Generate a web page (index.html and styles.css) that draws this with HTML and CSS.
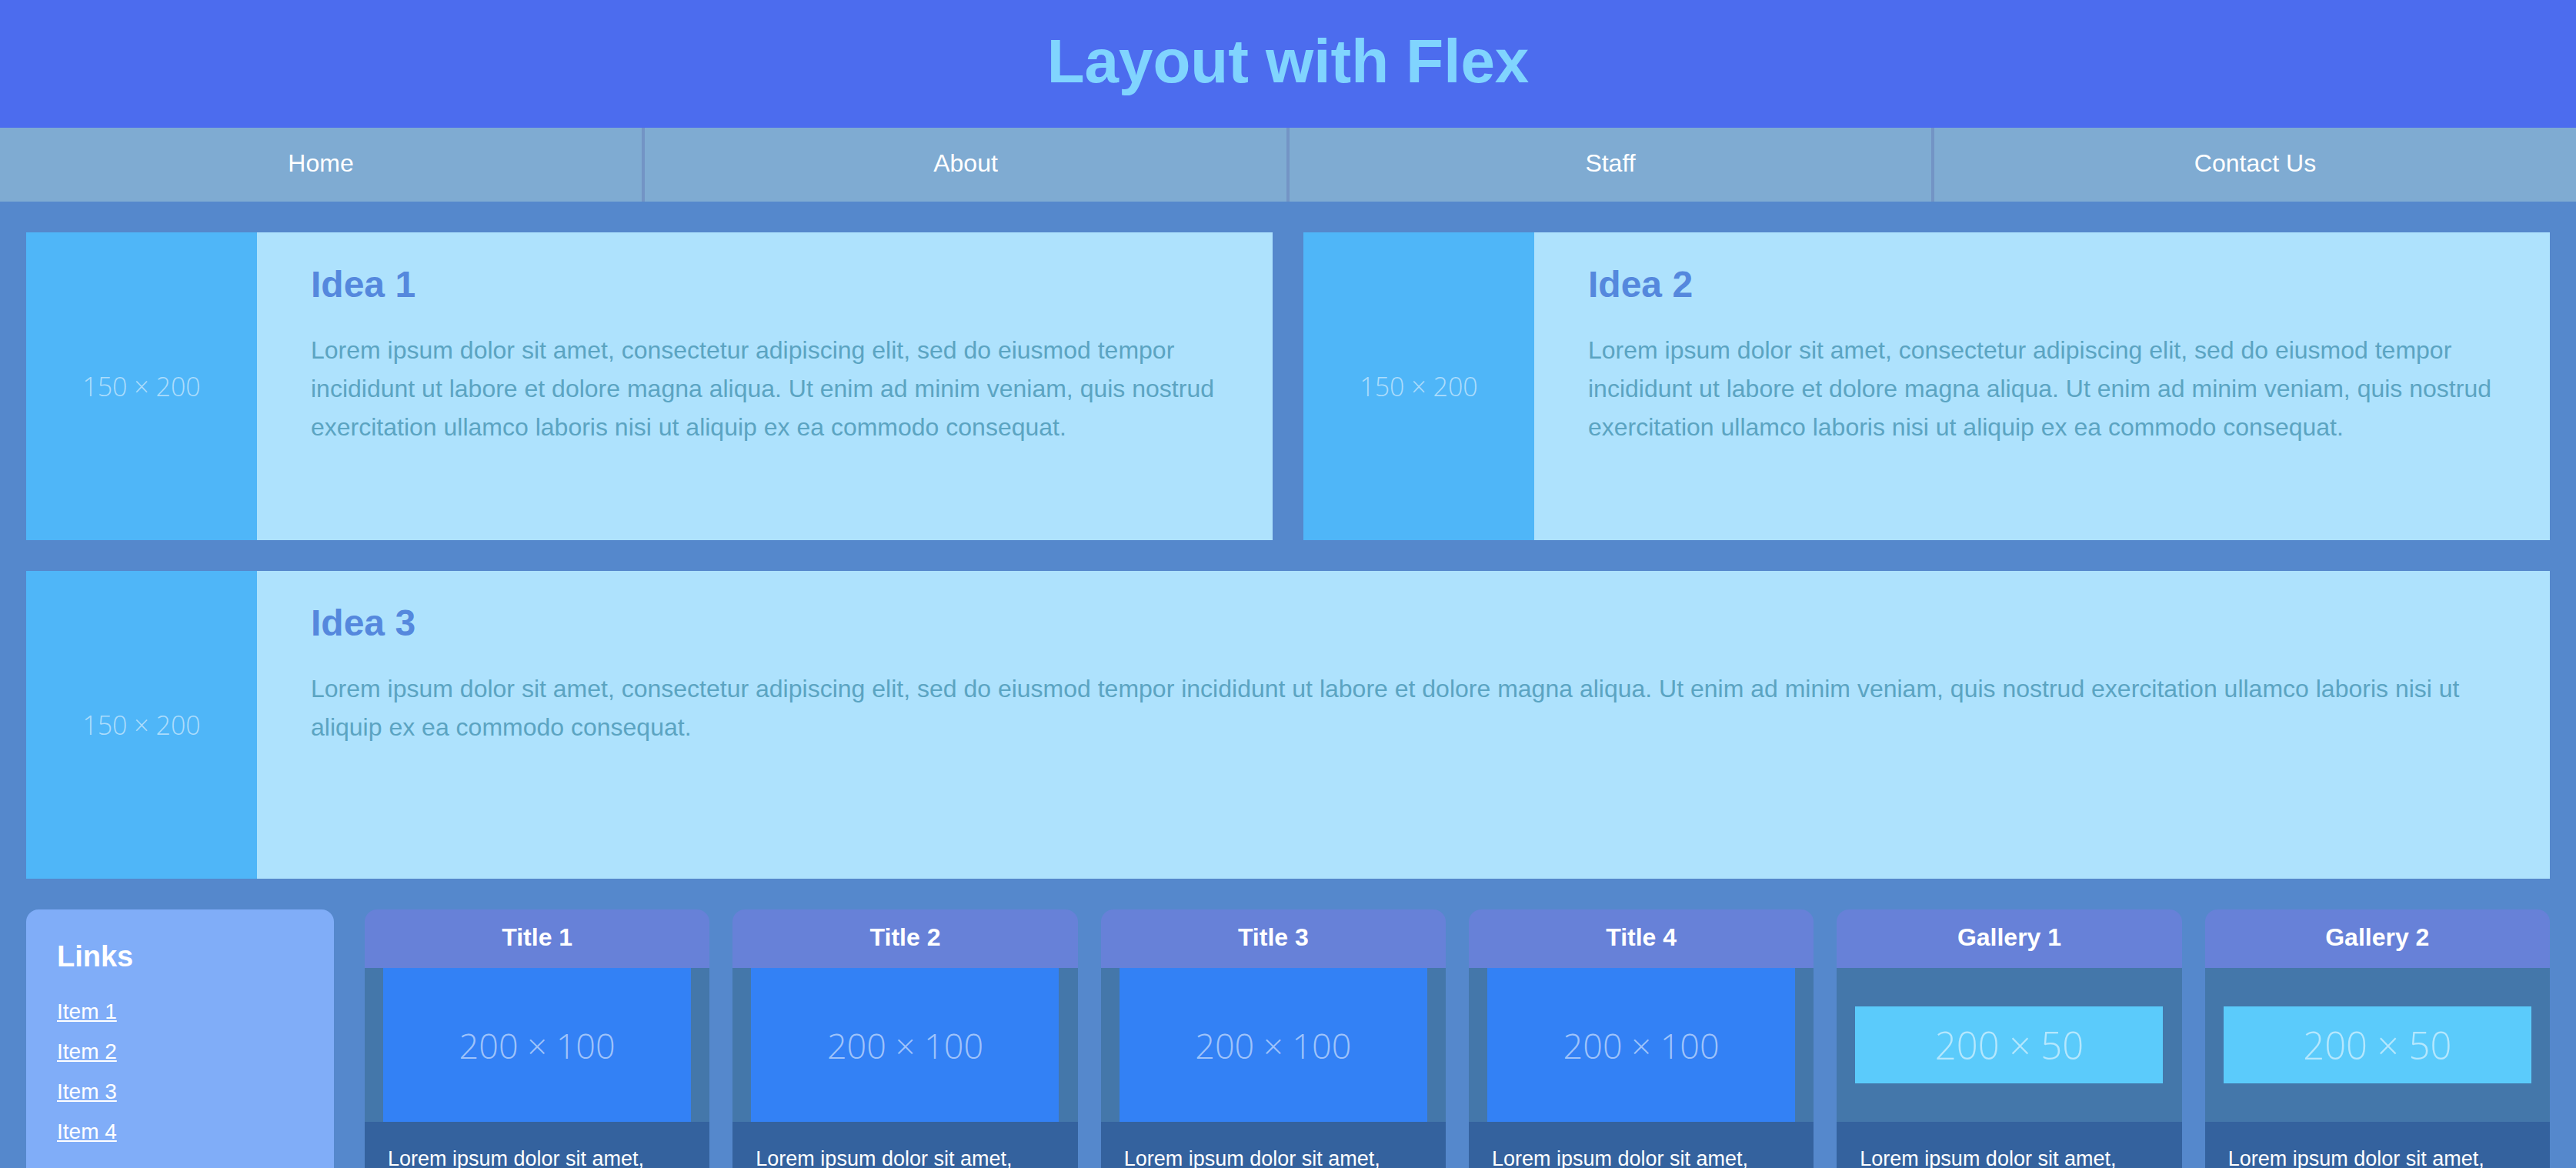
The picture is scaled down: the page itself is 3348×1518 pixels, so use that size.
FILE: index.html
```html
<!DOCTYPE html>
<html lang="en">
<head>
<meta charset="utf-8">
<title>Layout with Flex</title>
<link rel="stylesheet" href="styles.css">
</head>
<body>
<header class="site-header">
  <h1 class="site-title">Layout with Flex</h1>
</header>
<nav class="site-nav">
  <a class="nav-item" href="#">Home</a>
  <a class="nav-item" href="#">About</a>
  <a class="nav-item" href="#">Staff</a>
  <a class="nav-item" href="#">Contact Us</a>
</nav>
<main class="main">
  <section class="idea-row">
    <article class="idea">
      <div class="idea-img"><span class="ph ph-150">150 × 200</span></div>
      <div class="idea-body">
        <h2 class="idea-title">Idea 1</h2>
        <p class="idea-text">Lorem ipsum dolor sit amet, consectetur adipiscing elit, sed do eiusmod tempor incididunt ut labore et dolore magna aliqua. Ut enim ad minim veniam, quis nostrud exercitation ullamco laboris nisi ut aliquip ex ea commodo consequat.</p>
      </div>
    </article>
    <article class="idea">
      <div class="idea-img"><span class="ph ph-150">150 × 200</span></div>
      <div class="idea-body">
        <h2 class="idea-title">Idea 2</h2>
        <p class="idea-text">Lorem ipsum dolor sit amet, consectetur adipiscing elit, sed do eiusmod tempor incididunt ut labore et dolore magna aliqua. Ut enim ad minim veniam, quis nostrud exercitation ullamco laboris nisi ut aliquip ex ea commodo consequat.</p>
      </div>
    </article>
  </section>
  <section class="idea-row">
    <article class="idea">
      <div class="idea-img"><span class="ph ph-150">150 × 200</span></div>
      <div class="idea-body">
        <h2 class="idea-title">Idea 3</h2>
        <p class="idea-text">Lorem ipsum dolor sit amet, consectetur adipiscing elit, sed do eiusmod tempor incididunt ut labore et dolore magna aliqua. Ut enim ad minim veniam, quis nostrud exercitation ullamco laboris nisi ut aliquip ex ea commodo consequat.</p>
      </div>
    </article>
  </section>
  <section class="bottom-row">
    <aside class="links">
      <h3 class="links-title">Links</h3>
      <ul class="links-list">
        <li><a href="#">Item 1</a></li>
        <li><a href="#">Item 2</a></li>
        <li><a href="#">Item 3</a></li>
        <li><a href="#">Item 4</a></li>
      </ul>
    </aside>
    <div class="cards">
      <div class="card">
        <div class="card-head">Title 1</div>
        <div class="card-media"><div class="card-img"><span class="ph ph-100">200 × 100</span></div></div>
        <div class="card-text">Lorem ipsum dolor sit amet, consectetur adipiscing elit, sed do eiusmod tempor.</div>
      </div>
      <div class="card">
        <div class="card-head">Title 2</div>
        <div class="card-media"><div class="card-img"><span class="ph ph-100">200 × 100</span></div></div>
        <div class="card-text">Lorem ipsum dolor sit amet, consectetur adipiscing elit, sed do eiusmod tempor.</div>
      </div>
      <div class="card">
        <div class="card-head">Title 3</div>
        <div class="card-media"><div class="card-img"><span class="ph ph-100">200 × 100</span></div></div>
        <div class="card-text">Lorem ipsum dolor sit amet, consectetur adipiscing elit, sed do eiusmod tempor.</div>
      </div>
      <div class="card">
        <div class="card-head">Title 4</div>
        <div class="card-media"><div class="card-img"><span class="ph ph-100">200 × 100</span></div></div>
        <div class="card-text">Lorem ipsum dolor sit amet, consectetur adipiscing elit, sed do eiusmod tempor.</div>
      </div>
      <div class="card">
        <div class="card-head">Gallery 1</div>
        <div class="card-media"><div class="gallery-img"><span class="ph ph-50">200 × 50</span></div></div>
        <div class="card-text">Lorem ipsum dolor sit amet, consectetur adipiscing elit, sed do eiusmod tempor.</div>
      </div>
      <div class="card">
        <div class="card-head">Gallery 2</div>
        <div class="card-media"><div class="gallery-img"><span class="ph ph-50">200 × 50</span></div></div>
        <div class="card-text">Lorem ipsum dolor sit amet, consectetur adipiscing elit, sed do eiusmod tempor.</div>
      </div>
    </div>
  </section>
</main>
</body>
</html>
```
FILE: styles.css
```css
* { box-sizing: border-box; }

body {
  margin: 0;
  background: #5588cc;
  font-family: "Liberation Sans", Arial, sans-serif;
  color: #ffffff;
}

.site-header {
  height: 166px;
  background: #4c6cee;
  padding-top: 40px;
  text-align: center;
}

.site-title {
  margin: 0;
  font-size: 80px;
  line-height: 80px;
  font-weight: bold;
  color: #80d4fe;
}

.site-nav {
  display: flex;
  height: 96px;
  background: #7fabd2;
}

.nav-item {
  flex: 1;
  display: flex;
  align-items: center;
  justify-content: center;
  color: #ffffff;
  text-decoration: none;
  font-size: 32px;
  padding-bottom: 4px;
}

.nav-item + .nav-item {
  border-left: 4px solid #7394c5;
}

.main {
  display: flex;
  flex-direction: column;
  gap: 40px;
  padding: 40px 34px;
}

.idea-row {
  display: flex;
  gap: 40px;
}

.idea {
  flex: 1;
  display: flex;
  height: 400px;
  background: #aee2fd;
}

.idea-img {
  width: 300px;
  flex: none;
  background: #4fb6f8;
  display: flex;
  align-items: center;
  justify-content: center;
}

.idea-body {
  flex: 1;
  padding: 40px 50px 40px 70px;
}

.idea-title {
  margin: 0;
  font-size: 48px;
  font-weight: bold;
  color: #5588dd;
}

.idea-text {
  margin: 33px 0 0;
  font-size: 32px;
  line-height: 50px;
  color: #5ba4c2;
}

.ph {
  font-family: "Open Sans", "Noto Sans", sans-serif;
  font-weight: 300;
  color: rgba(255, 255, 255, 0.55);
  white-space: nowrap;
}

.ph-150 { font-size: 34px; }
.ph-100 { font-size: 45px; }
.ph-50 { font-size: 49px; }

.bottom-row {
  display: flex;
  gap: 40px;
  align-items: flex-start;
}

.links {
  width: 400px;
  flex: none;
  min-height: 600px;
  background: #80adf8;
  border-radius: 16px 16px 0 0;
  padding: 40px;
}

.links-title {
  margin: 0;
  font-size: 38px;
  font-weight: bold;
  color: #ffffff;
}

.links-list {
  list-style: none;
  margin: 24px 0 0;
  padding: 0;
}

.links-list li {
  font-size: 28px;
  line-height: 52px;
}

.links-list a {
  color: #ffffff;
  text-decoration: underline;
}

.cards {
  flex: 1;
  display: flex;
  gap: 30px;
}

.card {
  flex: 1;
  min-width: 0;
  display: flex;
  flex-direction: column;
}

.card-head {
  height: 76px;
  display: flex;
  align-items: center;
  justify-content: center;
  background: #6781d8;
  border-radius: 16px 16px 0 0;
  font-size: 32px;
  font-weight: bold;
  color: #ffffff;
  padding-bottom: 4px;
}

.card-media {
  height: 200px;
  background: #4477aa;
  display: flex;
  align-items: center;
  justify-content: center;
}

.card-img {
  width: 400px;
  height: 200px;
  background: #3381f5;
  display: flex;
  align-items: center;
  justify-content: center;
}

.gallery-img {
  width: 400px;
  height: 100px;
  background: #5bcbfb;
  display: flex;
  align-items: center;
  justify-content: center;
}

.card-text {
  background: #34629e;
  padding: 30px 30px 40px;
  font-size: 27px;
  line-height: 1.4;
  color: #ffffff;
  min-height: 300px;
}
```
